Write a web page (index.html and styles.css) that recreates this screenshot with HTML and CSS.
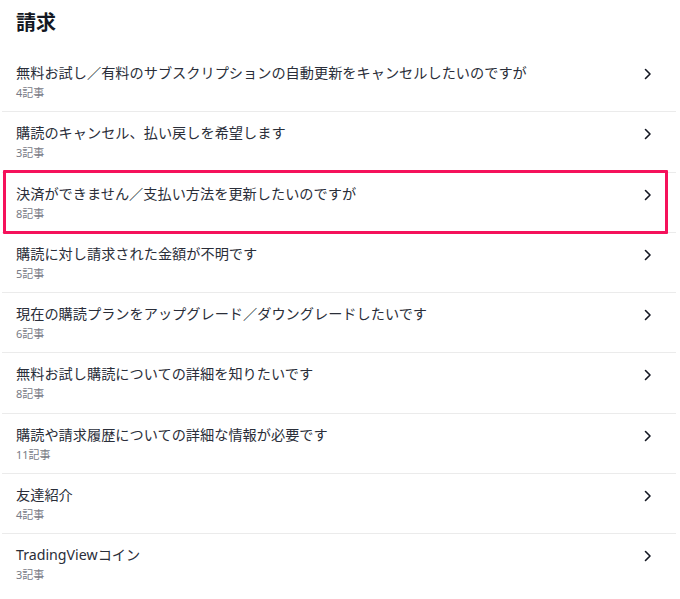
FILE: index.html
```html
<!DOCTYPE html>
<html lang="ja">
<head>
<meta charset="utf-8">
<link rel="stylesheet" href="styles.css">
</head>
<body>
<div class="page">
  <h1 class="heading">請求</h1>
  <ul class="list">
    <li class="row"><div class="text"><div class="title">無料お試し／有料のサブスクリプションの自動更新をキャンセルしたいのですが</div><div class="count">4記事</div></div><svg class="chev" viewBox="0 0 8 12" width="8" height="12"><polyline points="1.5,1.5 6,6 1.5,10.5"/></svg></li>
    <li class="row"><div class="text"><div class="title">購読のキャンセル、払い戻しを希望します</div><div class="count">3記事</div></div><svg class="chev" viewBox="0 0 8 12" width="8" height="12"><polyline points="1.5,1.5 6,6 1.5,10.5"/></svg></li>
    <li class="row highlight"><div class="text"><div class="title">決済ができません／支払い方法を更新したいのですが</div><div class="count">8記事</div></div><svg class="chev" viewBox="0 0 8 12" width="8" height="12"><polyline points="1.5,1.5 6,6 1.5,10.5"/></svg></li>
    <li class="row"><div class="text"><div class="title">購読に対し請求された金額が不明です</div><div class="count">5記事</div></div><svg class="chev" viewBox="0 0 8 12" width="8" height="12"><polyline points="1.5,1.5 6,6 1.5,10.5"/></svg></li>
    <li class="row"><div class="text"><div class="title">現在の購読プランをアップグレード／ダウングレードしたいです</div><div class="count">6記事</div></div><svg class="chev" viewBox="0 0 8 12" width="8" height="12"><polyline points="1.5,1.5 6,6 1.5,10.5"/></svg></li>
    <li class="row"><div class="text"><div class="title">無料お試し購読についての詳細を知りたいです</div><div class="count">8記事</div></div><svg class="chev" viewBox="0 0 8 12" width="8" height="12"><polyline points="1.5,1.5 6,6 1.5,10.5"/></svg></li>
    <li class="row"><div class="text"><div class="title">購読や請求履歴についての詳細な情報が必要です</div><div class="count">11記事</div></div><svg class="chev" viewBox="0 0 8 12" width="8" height="12"><polyline points="1.5,1.5 6,6 1.5,10.5"/></svg></li>
    <li class="row"><div class="text"><div class="title">友達紹介</div><div class="count">4記事</div></div><svg class="chev" viewBox="0 0 8 12" width="8" height="12"><polyline points="1.5,1.5 6,6 1.5,10.5"/></svg></li>
    <li class="row last"><div class="text"><div class="title">TradingViewコイン</div><div class="count">3記事</div></div><svg class="chev" viewBox="0 0 8 12" width="8" height="12"><polyline points="1.5,1.5 6,6 1.5,10.5"/></svg></li>
  </ul>
</div>
</body>
</html>
```
FILE: styles.css
```css
html, body {
  margin: 0;
  padding: 0;
  background: #ffffff;
}
body {
  font-family: "Noto Sans", "Noto Sans CJK JP", sans-serif;
  color: #131722;
}
.page {
  width: 674px;
  margin-left: 2px;
}
.heading {
  margin: 0;
  height: 52px;
  box-sizing: border-box;
  padding: 8px 14px 0;
  font-size: 20px;
  line-height: 28px;
  font-weight: 700;
  font-family: "Noto Sans CJK JP", sans-serif;
}
.list {
  list-style: none;
  margin: 0;
  padding: 0;
}
.row {
  position: relative;
  display: flex;
  align-items: flex-start;
  justify-content: space-between;
  height: 60.3px;
  box-sizing: border-box;
  padding: 11px 24px 0 14px;
  border-bottom: 1px solid #ebebeb;
}
.row.last {
  border-bottom: none;
}
.title {
  font-size: 14.2px;
  line-height: 20px;
  color: #2a2e39;
  font-family: "Noto Sans", "Noto Sans CJK JP", sans-serif;
}
.count {
  margin-top: 1px;
  font-size: 11px;
  line-height: 17px;
  color: #787b86;
  font-family: "Noto Sans", "Noto Sans CJK JP", sans-serif;
}
.chev {
  margin-top: 5px;
  fill: none;
  stroke: #131722;
  stroke-width: 1.6;
  stroke-linecap: round;
  stroke-linejoin: round;
}
.highlight::after {
  content: "";
  position: absolute;
  left: 1px;
  right: 8px;
  top: -3px;
  bottom: -2px;
  border: 3px solid #f5115b;
  border-radius: 1px;
  pointer-events: none;
}
```
